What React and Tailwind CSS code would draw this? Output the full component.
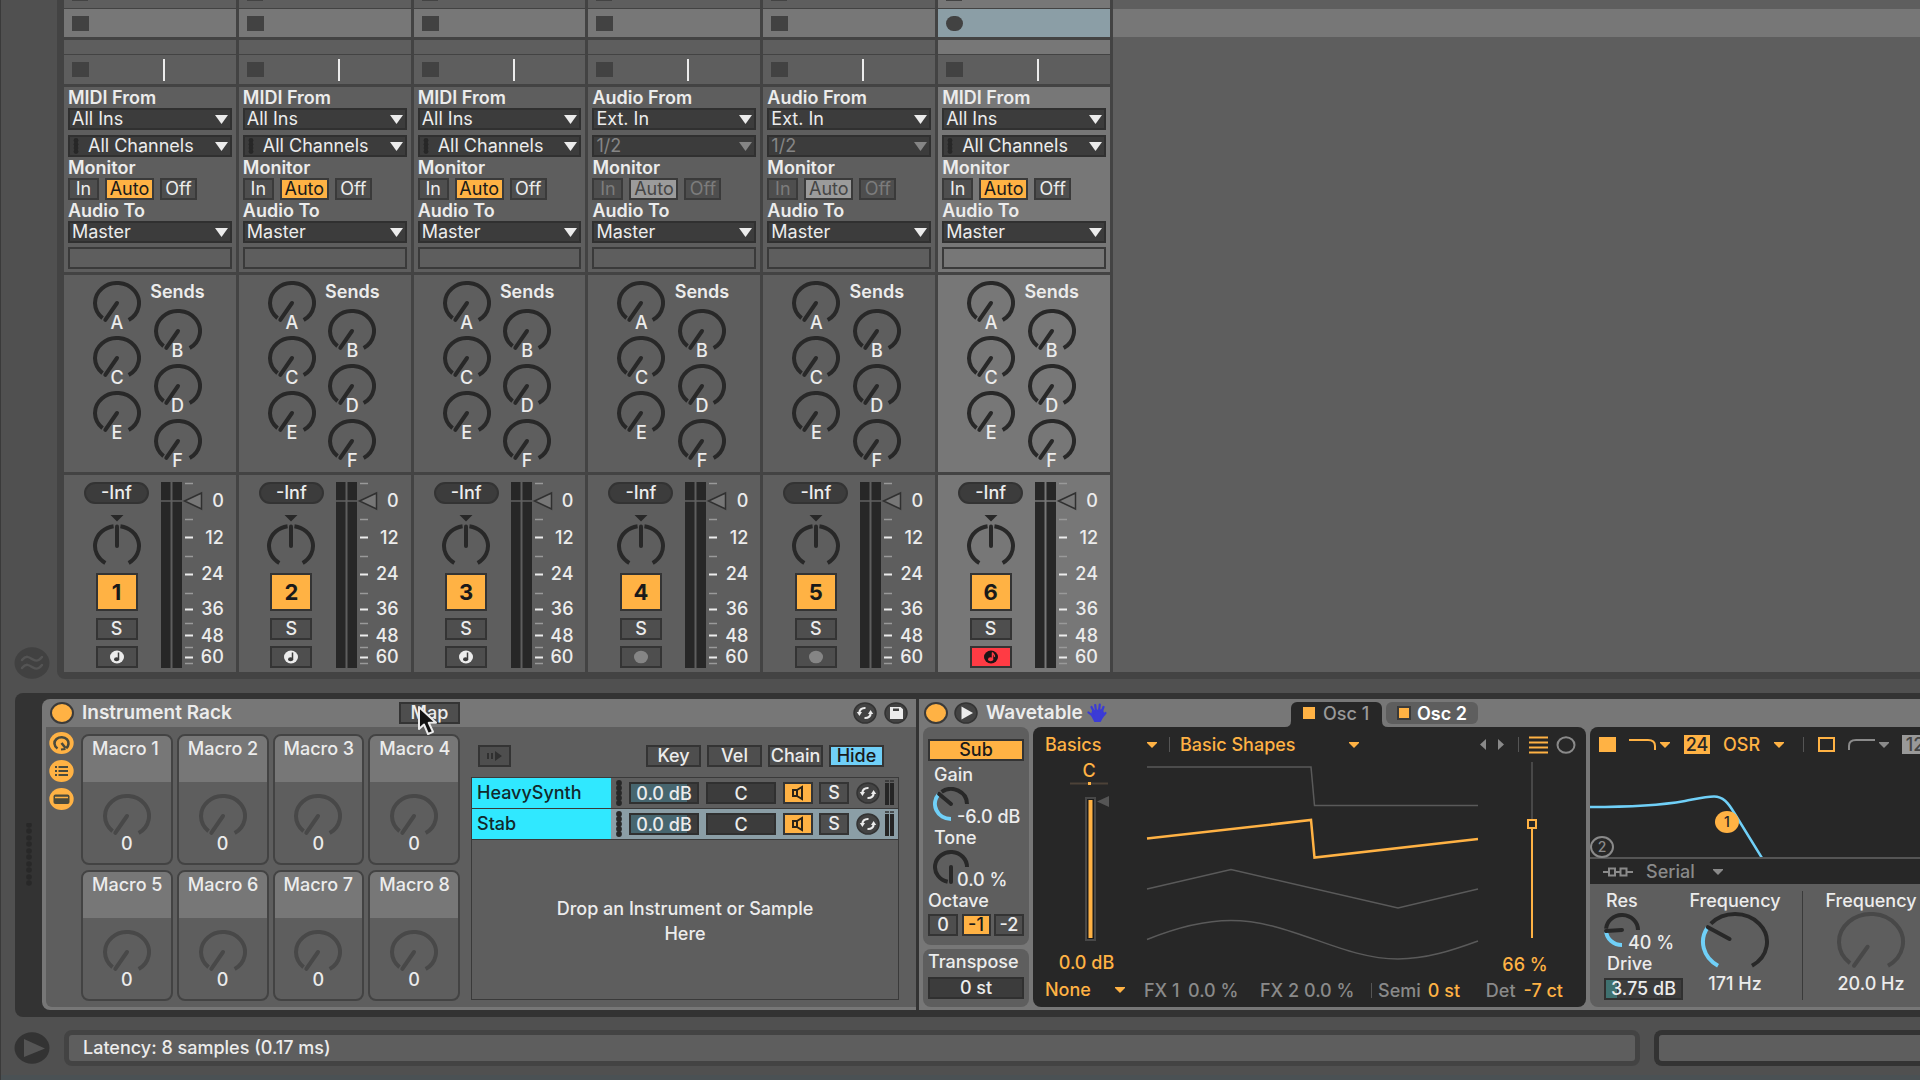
import { useState } from 'react'

const TRACKS = [
  { id: 1, type: 'midi' },
  { id: 2, type: 'midi' },
  { id: 3, type: 'midi' },
  { id: 4, type: 'audio' },
  { id: 5, type: 'audio' },
  { id: 6, type: 'midi', selected: true, armed: true },
]

const METER_LABELS = [
  { text: '0', height: 'h-[36px]' },
  { text: '12', height: 'h-[37px]' },
  { text: '24', height: 'h-[36px]' },
  { text: '36', height: 'h-[34px]' },
  { text: '48', height: 'h-[19px]' },
  { text: '60', height: 'h-[24px]' },
]
const MAJOR_TICKS = [62, 99, 134, 160, 182]
const MINOR_TICKS = [8, 44, 81, 118, 148, 172, 188]

const BUTTON = 'h-[22px] border-2 border-[#343434] bg-[#4e4e4e] text-center leading-[18px] text-[#ececec]'
const BUTTON_ON = 'h-[22px] border-2 border-[#343434] bg-[#ffb244] text-center leading-[18px] text-[#1a1a1a]'
const FIELD = 'h-[22px] border-2 border-[#303030] bg-[#3c3c3c] text-center leading-[18px] text-[#ececec] outline-none'

function point(cx, cy, rx, ry, angle) {
  const rad = (angle * Math.PI) / 180
  return `${(cx + rx * Math.sin(rad)).toFixed(2)} ${(cy - ry * Math.cos(rad)).toFixed(2)}`
}

function arc(cx, cy, rx, ry, from, to) {
  const large = to - from > 180 ? 1 : 0
  return `M${point(cx, cy, rx, ry, from)}A${rx} ${ry} 0 ${large} 1 ${point(cx, cy, rx, ry, to)}`
}

function Knob({ label, rx = 22, ry = 20, start = -148, end = 148, value = -148, inner = 0, gap = 9, color = '#282828', width = 48, height = 44, className = '' }) {
  const cx = width / 2
  const cy = ry + 2
  const from = value + gap

  return (
    <span className={`relative block shrink-0 ${className}`}>
      <svg width={width} height={height} fill="none" strokeWidth="4" aria-hidden="true">
        {value > start && <path d={arc(cx, cy, rx, ry, start, value)} stroke="#70d0f8" />}
        <path d={arc(cx, cy, rx, ry, from, end)} stroke={color} />
        <path
          d={`M${point(cx, cy, rx * inner, ry * inner, value)}L${point(cx, cy, rx, ry, value)}`}
          stroke={color}
          strokeLinecap="round"
        />
      </svg>
      <input type="range" className="absolute inset-0 size-full opacity-0" aria-label={label} />
    </span>
  )
}

function Caret({ className = '' }) {
  return (
    <svg className={`pointer-events-none absolute ${className}`} width="13" height="9" viewBox="0 0 13 9" aria-hidden="true">
      <path d="M0 0h13L6.500 9z" fill="currentColor" />
    </svg>
  )
}

function SmallCaret() {
  return (
    <svg className="pointer-events-none absolute right-0 top-[9px]" width="10" height="6" viewBox="0 0 10 6" aria-hidden="true">
      <path d="M0 0h10v1L5 6 0 1z" fill="currentColor" />
    </svg>
  )
}

function TrackSelect({ label, value, disabled, dots, className = '' }) {
  return (
    <div className={`relative ${disabled ? 'text-[#858585]' : 'text-[#ececec]'} ${className}`}>
      <select
        aria-label={label}
        disabled={disabled}
        className={`block h-[22px] w-full appearance-none border-2 border-[#303030] bg-[#3c3c3c] leading-[18px] opacity-100 outline-none ${dots ? 'pl-[18px]' : 'pl-[2px]'}`}
      >
        <option>{value}</option>
      </select>
      {dots && (
        <svg className="pointer-events-none absolute left-[5px] top-[3px]" width="6" height="16" fill="#272727" aria-hidden="true">
          <circle cx="3" cy="2.500" r="2.400" />
          <circle cx="3" cy="6.200" r="2.400" />
          <circle cx="3" cy="9.900" r="2.400" />
          <circle cx="3" cy="13.600" r="2.400" />
        </svg>
      )}
      <Caret className="right-[4px] top-[7px]" />
    </div>
  )
}

function PlainSelect({ label, value, className = '', color = 'text-[#ffb244]' }) {
  return (
    <div className={`relative shrink-0 ${color} ${className}`}>
      <select aria-label={label} className="block h-6 w-full appearance-none bg-transparent leading-6 outline-none">
        <option>{value}</option>
      </select>
      <SmallCaret />
    </div>
  )
}

function MonitorButtons({ disabled }) {
  const [mode, setMode] = useState('Auto')
  const widths = { In: 'w-[31px]', Auto: 'w-[49px]', Off: 'w-[37px]' }

  return (
    <div className="flex gap-[6px]">
      {['In', 'Auto', 'Off'].map((name) => {
        const on = mode === name
        const tone = disabled
          ? on
            ? 'bg-[#9b9b9b] text-[#454545]'
            : 'bg-[#4e4e4e] text-[#7c7c7c]'
          : on
            ? 'bg-[#ffb244] text-[#1a1a1a]'
            : 'bg-[#4e4e4e] text-[#ececec]'
        return (
          <button
            key={name}
            type="button"
            disabled={disabled}
            aria-pressed={on}
            className={`h-[22px] border-2 border-[#3a3a3a] text-center leading-[18px] ${widths[name]} ${tone}`}
            onClick={() => setMode(name)}
          >
            {name}
          </button>
        )
      })}
    </div>
  )
}

function ArmIcon({ type, armed }) {
  if (type === 'audio') {
    return (
      <svg width="16" height="14" aria-hidden="true">
        <ellipse cx="8" cy="7" rx="7" ry="6.300" fill="#858585" />
      </svg>
    )
  }
  const disc = armed ? '#1d1416' : '#ececec'
  const note = armed ? '#ff3b44' : '#3c3c3c'
  return (
    <svg width="16" height="14" aria-hidden="true">
      <ellipse cx="8" cy="7" rx="7" ry="6.500" fill={disc} />
      <path d="M9.500 2.500V9" stroke={note} strokeWidth="1.500" fill="none" />
      <ellipse cx="7.600" cy="9.300" rx="2.600" ry="2" fill={note} />
      {armed && <path d="M9.500 2.500c.3 2 2.500 2 2 4.500" stroke={note} strokeWidth="1.300" fill="none" />}
    </svg>
  )
}

function Sends() {
  const cell = (name) => (
    <div key={name} className="flex h-[55px] flex-col items-center">
      <Knob label={`Send ${name}`} height={42} />
      <span className="pointer-events-none relative -mt-[11px] h-5 font-medium leading-[22px]">{name}</span>
    </div>
  )
  return (
    <div className="flex h-[197px] pl-[23px]">
      <div className="w-[60px] pt-[6px]">{['A', 'C', 'E'].map(cell)}</div>
      <div className="w-[61px] pt-[6px]">
        <div className="mb-2 h-5 text-center font-semibold leading-[22px]">Sends</div>
        {['B', 'D', 'F'].map(cell)}
      </div>
    </div>
  )
}

function Mixer({ track }) {
  return (
    <div className="flex h-[197px]">
      <div className="ml-5 flex w-[65px] shrink-0 flex-col items-center pt-[7px]">
        <div className="h-[22px] w-full rounded-full border-2 border-[#333] bg-[#3c3c3c] text-center font-medium leading-[18px]">-Inf</div>
        <span className="relative mt-[10px] mb-[8px]">
          <svg className="block" width="50" height="51" fill="none" stroke="#282828" strokeWidth="4" aria-hidden="true">
            <path d="M18.500 1h13L25 7.500z" fill="#282828" stroke="none" />
            <path d={arc(25, 32, 22, 20, -148, -9)} />
            <path d={arc(25, 32, 22, 20, 9, 148)} />
            <path d="M25 12.500V32" strokeLinecap="round" />
          </svg>
          <input type="range" className="absolute inset-0 size-full opacity-0" aria-label="Track panning" />
        </span>
        <button type="button" className="h-[38px] w-[42px] border-2 border-[#343434] bg-[#ffb244] text-[22px] font-bold leading-[34px] text-[#1a1a1a]">
          {track.id}
        </button>
        <button type="button" className={`mt-[7px] w-[42px] font-medium ${BUTTON}`}>S</button>
        <button
          type="button"
          aria-label="Arm"
          className={`mt-[6px] flex h-[22px] w-[42px] items-center justify-center border-2 border-[#343434] ${track.armed ? 'bg-[#ff3b44]' : 'bg-[#4e4e4e]'}`}
        >
          <ArmIcon type={track.type} armed={track.armed} />
        </button>
      </div>
      <svg className="ml-[12px] shrink-0 overflow-visible" width="36" height="197" aria-hidden="true">
        <path d="M0 7h9.500v186H0zM11.500 7H21v186h-9.500z" fill="#272727" />
        <path d="M0 26h21" stroke={track.selected ? '#777' : '#626262'} strokeWidth="1.500" />
        <path d="M23.500 26l17-8v16z" fill="#777" stroke="#303030" strokeWidth="1.500" />
        {MAJOR_TICKS.map((y) => (
          <path key={y} d={`M24 ${y}.5h8`} stroke="#ececec" strokeWidth="2" />
        ))}
        {MINOR_TICKS.map((y) => (
          <path key={y} d={`M24 ${y}.5h8`} stroke="#999" strokeWidth="1.500" />
        ))}
      </svg>
      <div className="flex-1 pr-[12px] pt-[8px] text-right">
        {METER_LABELS.map((label) => (
          <div key={label.text} className={`flex items-center justify-end font-medium leading-none ${label.height}`}>
            {label.text}
          </div>
        ))}
      </div>
    </div>
  )
}

function Track({ track }) {
  const midi = track.type === 'midi'
  const body = track.selected ? 'bg-[#777]' : 'bg-[#5e5e5e]'

  return (
    <section className="min-w-0" aria-label={`Track ${track.id}`}>
      <div className={`mb-px h-[8px] ${body}`}>
        <div className="ml-[8px] h-px w-4 bg-[#434343]" />
      </div>
      <div className={`mb-[3px] flex h-7 items-center pl-[8px] ${track.selected ? 'bg-[#8b9ea6]' : 'bg-[#777]'}`}>
        <button
          type="button"
          aria-label={track.selected ? 'Record clip' : 'Stop clip'}
          className={`h-[15px] w-[17px] bg-[#424242] ${track.selected ? 'rounded-full' : ''}`}
        />
      </div>
      <div className={`mb-px h-[14px] ${body}`} />
      <div className="mb-[3px] flex h-[29px] items-center bg-[#5e5e5e] pl-[8px]">
        <button type="button" aria-label="Stop track clips" className="h-[15px] w-[17px] bg-[#424242]" />
        <div className="ml-[74px] h-[22px] w-[2px] bg-[#ececec]" />
      </div>
      <div className={`mb-[3px] h-[185px] px-1 ${body}`}>
        <div className="h-[21px] font-semibold leading-[22px]">{midi ? 'MIDI From' : 'Audio From'}</div>
        <TrackSelect label="Input type" value={midi ? 'All Ins' : 'Ext. In'} />
        <TrackSelect className="mt-[5px]" label="Input channel" value={midi ? 'All Channels' : '1/2'} disabled={!midi} dots={midi} />
        <div className="h-[21px] font-semibold leading-[21px]">Monitor</div>
        <MonitorButtons disabled={!midi} />
        <div className="h-[21px] font-semibold leading-[21px]">Audio To</div>
        <TrackSelect label="Output type" value="Master" />
        <div className="mt-[4px] h-[22px] border-2 border-[#3a3a3a]" />
      </div>
      <div className={`mb-[3px] ${body}`}>
        <Sends />
      </div>
      <div className={body}>
        <Mixer track={track} />
      </div>
    </section>
  )
}

function PowerButton() {
  return <button type="button" aria-label="Device on" aria-pressed="true" className="h-[22px] w-6 shrink-0 rounded-[50%] border-2 border-[#3a3a3a] bg-[#ffb244]" />
}

function SwapIcon() {
  return (
    <svg width="24" height="22" viewBox="0 0 24 22" fill="none" stroke="#ececec" strokeWidth="2.200" aria-hidden="true">
      <ellipse cx="12" cy="11" rx="11" ry="10" fill="#434343" stroke="#333" strokeWidth="1.500" />
      <path d="M12.500 6C8.500 5.800 6.500 8 6.300 11" />
      <path d="M3.800 10h5.200l-2.600 4z" fill="#ececec" stroke="none" />
      <path d="M11.500 16c4 .2 6-2 6.200-5" />
      <path d="M20.200 12H15l2.600-4z" fill="#ececec" stroke="none" />
    </svg>
  )
}

function SaveIcon() {
  return (
    <svg width="24" height="22" viewBox="0 0 24 22" aria-hidden="true">
      <ellipse cx="12" cy="11" rx="11" ry="10" fill="#434343" stroke="#333" strokeWidth="1.500" />
      <path d="M6 5h10.500L19 7.200V17H6z" fill="#ececec" />
      <path d="M9 6.500h6V9H9z" fill="#434343" />
    </svg>
  )
}

function RackSideIcons() {
  return (
    <div className="flex w-[35px] shrink-0 flex-col gap-[6px] pl-[3px] pt-[5px]">
      <button type="button" aria-label="Show macros">
        <svg width="25" height="22" viewBox="0 0 25 22" fill="none" stroke="#4a4a3c" strokeWidth="2.600" aria-hidden="true">
          <ellipse cx="12.500" cy="11" rx="12.200" ry="11" fill="#ffb244" stroke="none" />
          <path d="M8.500 16.500C4.800 14 4.500 9.500 7.500 7c3-2.500 8-2.300 10.500.3 2.300 2.500 2 6.500-.8 9" />
          <path d="M12.500 11l4 5" />
          <path d="M12 17.500l4.500-.5" strokeWidth="2" />
        </svg>
      </button>
      <button type="button" aria-label="Show chains">
        <svg width="25" height="22" viewBox="0 0 25 22" stroke="#4a4a3c" strokeWidth="2" aria-hidden="true">
          <ellipse cx="12.500" cy="11" rx="12.200" ry="11" fill="#ffb244" stroke="none" />
          <path d="M6 7h2M6 11h2M6 15h2M9.500 7H19M9.500 11H19M9.500 15H19" />
        </svg>
      </button>
      <button type="button" aria-label="Show devices">
        <svg width="25" height="22" viewBox="0 0 25 22" aria-hidden="true">
          <ellipse cx="12.500" cy="11" rx="12.200" ry="11" fill="#ffb244" />
          <rect x="4.500" y="6.500" width="16" height="9.500" rx="2" fill="#4a4a3c" />
          <path d="M6 9.500h13" stroke="#ffb244" strokeWidth="1.500" />
        </svg>
      </button>
    </div>
  )
}

function Macro({ index }) {
  return (
    <div className="h-[131px] overflow-hidden rounded-lg border-2 border-[#434343]">
      <div className="h-[46px] bg-[#777] pl-[9px] pt-[2px] font-medium leading-[21px] whitespace-nowrap">Macro {index}</div>
      <div className="flex flex-col items-center pt-[12px]">
        <Knob label={`Macro ${index}`} color="#484848" height={42} />
        <span className="-mt-[2px] font-medium leading-5">0</span>
      </div>
    </div>
  )
}

function ChainRow({ name, selected }) {
  return (
    <li className={`flex h-[31px] items-center border-b border-[#3a3a3a] ${selected ? 'bg-[#8b9ea6]' : ''}`}>
      <span className="h-full w-[139px] bg-[#30e8ff] pl-[5px] font-medium leading-[30px] text-[#12292c]">{name}</span>
      <svg className="ml-[5px]" width="6" height="26" fill="#272727" aria-hidden="true">
        {[3, 8, 13, 18, 23].map((y) => (
          <circle key={y} cx="3" cy={y} r="2.900" />
        ))}
      </svg>
      <input
        aria-label={`${name} volume`}
        defaultValue="0.0 dB"
        className="ml-[7px] h-[22px] w-[70px] border-2 border-[#303030] bg-linear-to-r from-[#47666f] from-85% to-[#3c3c3c] to-85% text-center font-medium leading-[18px] text-[#ececec] outline-none"
      />
      <input aria-label={`${name} pan`} defaultValue="C" className={`ml-[7px] w-[70px] font-medium ${FIELD}`} />
      <button type="button" aria-label="Chain activator" className={`ml-[7px] flex w-[30px] items-center justify-center ${BUTTON_ON}`}>
        <svg width="14" height="16" fill="none" stroke="#2a2216" strokeWidth="2" aria-hidden="true">
          <path d="M2 5h4v6H2zM6 5l5-3v12l-5-3" />
        </svg>
      </button>
      <button type="button" className={`ml-[6px] w-[30px] font-medium ${BUTTON}`}>S</button>
      <button type="button" aria-label="Hot swap" className="ml-[7px]">
        <SwapIcon />
      </button>
      <svg className="ml-[5px]" width="10" height="26" aria-hidden="true">
        <path d="M0 3h4v22H0zM5 3h4v22H5z" fill="#252525" />
        <path d="M0 1h4M5 1h4" stroke="#333" strokeWidth="1.500" />
      </svg>
    </li>
  )
}

function InstrumentRack() {
  return (
    <section className="w-[874px] shrink-0 rounded-l-lg bg-[#777] pb-[3px] pl-1">
      <header className="flex h-7 items-center pl-[4px] pr-[8px]">
        <PowerButton />
        <h2 className="ml-[8px] text-[19px] font-semibold">Instrument Rack</h2>
        <div className="relative ml-auto mr-[393px]">
          <button type="button" className={`block w-[61px] font-medium ${BUTTON}`}>Map</button>
          <svg className="absolute left-[18px] top-[3px]" width="24" height="32" viewBox="0 0 24 32" aria-hidden="true">
            <path d="M2 2v22l5-4.500L11 29l5-2.200-4.300-9H19z" fill="#111" stroke="#ececec" strokeWidth="2" strokeLinejoin="round" />
          </svg>
        </div>
        <button type="button" aria-label="Hot swap preset">
          <SwapIcon />
        </button>
        <button type="button" aria-label="Save preset" className="ml-[7px]">
          <SaveIcon />
        </button>
      </header>
      <div className="flex h-[280px] rounded-bl-md bg-[#5e5e5e]">
        <RackSideIcons />
        <div className="grid w-[379px] shrink-0 auto-rows-min grid-cols-4 gap-x-1 gap-y-[5px] pt-[7px]">
          {[1, 2, 3, 4, 5, 6, 7, 8].map((n) => (
            <Macro key={n} index={n} />
          ))}
        </div>
        <div className="ml-[11px] w-[428px] pt-[18px]">
          <div className="flex gap-[6px] pl-[7px] pr-[15px] font-medium">
            <button type="button" aria-label="Auto select" className={`mr-auto flex w-[33px] items-center justify-center ${BUTTON}`}>
              <svg width="17" height="12" fill="#303030" aria-hidden="true">
                <path d="M1 3h2v6H1zM5 3h2v6H5zM9 1l7 5-7 5z" />
              </svg>
            </button>
            <button type="button" className={`w-[55px] ${BUTTON}`}>Key</button>
            <button type="button" className={`w-[55px] ${BUTTON}`}>Vel</button>
            <button type="button" className={`flex w-[55px] justify-center ${BUTTON}`}>Chain</button>
            <button type="button" className="h-[22px] w-[55px] border-2 border-[#343434] bg-[#70d0f8] leading-[18px] text-[#1a1a1a]">Hide</button>
          </div>
          <div className="mt-[10px] h-[223px] border border-[#3a3a3a]">
            <ul>
              <ChainRow name="HeavySynth" />
              <ChainRow name="Stab" selected />
            </ul>
            <p className="mx-auto mt-[56px] w-[280px] text-center font-medium leading-[25px]">Drop an Instrument or Sample Here</p>
          </div>
        </div>
      </div>
    </section>
  )
}

function SubPanel() {
  const small = { rx: 16, ry: 15, width: 36, height: 34, start: -180, end: 90, gap: 12 }
  return (
    <div className="flex w-[106px] shrink-0 flex-col gap-1 font-medium">
      <div className="h-[218px] rounded-lg bg-[#5e5e5e] px-[5px] pt-[12px]">
        <button type="button" className={`mb-[3px] block w-full ${BUTTON_ON}`}>Sub</button>
        <div className="h-[21px] pl-[6px] leading-[21px]">Gain</div>
        <div className="flex h-[42px] pl-[5px]">
          <Knob label="Sub gain" {...small} value={-48} className="mt-[2px]" />
          <span className="pointer-events-none relative -ml-[12px] self-end leading-5 whitespace-nowrap">-6.0 dB</span>
        </div>
        <div className="h-[21px] pl-[6px] leading-[21px]">Tone</div>
        <div className="flex h-[42px] pl-[5px]">
          <Knob label="Sub tone" {...small} value={-180} className="mt-[2px]" />
          <span className="pointer-events-none relative -ml-[12px] self-end leading-5 whitespace-nowrap">0.0 %</span>
        </div>
        <div className="mb-[3px] h-[21px] leading-[21px]">Octave</div>
        <div className="flex justify-between">
          <button type="button" className={`w-[30px] ${BUTTON}`}>0</button>
          <button type="button" className={`w-[29px] ${BUTTON_ON}`}>-1</button>
          <button type="button" className={`w-[30px] ${BUTTON}`}>-2</button>
        </div>
      </div>
      <div className="h-[58px] rounded-lg bg-[#5e5e5e] px-[5px] pt-[2px]">
        <label className="mb-[2px] block h-[21px] leading-[21px]" htmlFor="transpose">Transpose</label>
        <input id="transpose" defaultValue="0 st" className={`w-full ${FIELD}`} />
      </div>
    </div>
  )
}

function OscPanel() {
  return (
    <div className="flex w-[553px] shrink-0 flex-col rounded-lg bg-[#272727] font-medium text-[#ffb244]">
      <div className="flex h-[34px] items-center pl-[12px] pr-[10px] pt-px">
        <PlainSelect label="Wavetable category" value="Basics" className="w-[112px]" />
        <div className="mx-[12px] mr-[10px] h-[15px] w-px bg-[#555]" />
        <PlainSelect label="Wavetable" value="Basic Shapes" className="w-[179px]" />
        <div className="ml-auto flex items-center">
          <button type="button" aria-label="Previous wavetable">
            <svg width="7" height="11" fill="#8a8a8a"><path d="M6 0v11L0 5.500z" /></svg>
          </button>
          <button type="button" aria-label="Next wavetable" className="ml-[11px]">
            <svg width="7" height="11" fill="#8a8a8a"><path d="M0 0v11l6-5.500z" /></svg>
          </button>
          <div className="mx-[10px] ml-[13px] h-[15px] w-px bg-[#555]" />
          <button type="button" aria-label="Stacked view">
            <svg width="19" height="18" stroke="#ffb244" strokeWidth="2"><path d="M0 1.500h19M0 6.500h19M0 11.500h19M0 16.500h19" /></svg>
          </button>
          <button type="button" aria-label="Polar view" className="ml-[8px]">
            <svg width="20" height="18" fill="none" stroke="#8a8a8a" strokeWidth="2"><ellipse cx="10" cy="9" rx="8.500" ry="7.800" /></svg>
          </button>
        </div>
      </div>
      <div className="flex h-[214px]">
        <div className="flex w-[112px] flex-col items-center">
          <span className="leading-5">C</span>
          <svg width="112" height="172" aria-hidden="true">
            <path d="M37 2.500h38" stroke="#4d4238" strokeWidth="2" />
            <path d="M56.500 1v3" stroke="#ffb244" strokeWidth="3" />
            <rect x="53" y="17" width="9" height="142" fill="#1c1c1c" stroke="#484848" strokeWidth="2" />
            <path d="M57.500 19v138" stroke="#ffb244" strokeWidth="4" />
            <path d="M64 20.500l12-5.500v11z" fill="#555" />
          </svg>
          <span className="pr-[5px] leading-5">0.0 dB</span>
        </div>
        <svg className="shrink-0" width="335" height="214" fill="none" stroke="#5a5a5a" strokeWidth="1.500" aria-hidden="true">
          <path d="M2 6h164l3.500 38.500H333" />
          <path d="M2 128l84-19.500L253 147l80-19" />
          <path d="M2 178.500C28 168 55 159.500 86 159.500c60 0 110 38.500 167 38.500 28 0 54-8.500 80-18" />
          <path d="M2 77.500L166 59l3.500 37.500L333 78" stroke="#ffb244" strokeWidth="2.500" />
        </svg>
        <div className="flex flex-1 flex-col items-center">
          <span className="relative block h-[194px]">
            <svg width="20" height="194" fill="none" stroke="#ffb244" aria-hidden="true">
              <path d="M9 1v58" stroke="#555" strokeWidth="1.500" />
              <path d="M9 67v110" strokeWidth="2" />
              <rect x="5" y="59" width="8" height="8" strokeWidth="2" />
            </svg>
            <input type="range" aria-label="Wave position" className="absolute inset-0 size-full opacity-0" />
          </span>
          <span className="pr-[16px] leading-5">66 %</span>
        </div>
      </div>
      <div className="flex h-[30px] items-center pl-[12px] pr-[23px] whitespace-nowrap text-[#8a8a8a]">
        <PlainSelect label="Effect mode" value="None" className="w-[80px]" />
        <span className="ml-[19px] w-[44px]">FX 1</span>
        <span className="w-[72px]">0.0 %</span>
        <span className="w-[44px]">FX 2</span>
        <span>0.0 %</span>
        <span className="ml-auto flex items-center">
          <span className="mr-[6px] h-[15px] w-px bg-[#555]" />
          Semi
          <span className="ml-[7px] w-[58px] text-[#ffb244]">0 st</span>
          Det
          <span className="ml-[8px] text-[#ffb244]">-7 ct</span>
        </span>
      </div>
    </div>
  )
}

function FilterPanel() {
  const small = { rx: 16, ry: 15, width: 36, height: 34, start: -180, end: 90, gap: 9 }
  const large = { rx: 32, ry: 28, width: 70, height: 60, inner: 0.2 }
  return (
    <div className="min-w-0 flex-1 overflow-hidden rounded-l-lg bg-[#5e5e5e] font-medium">
      <div className="flex h-[34px] w-[440px] items-center bg-[#272727] pl-[9px] pt-px text-[#ffb244]">
        <button type="button" aria-label="Filter 1 on" className="h-[15px] w-[17px] bg-[#ffb244]" />
        <span className="relative ml-[12px] h-6 w-[42px]">
          <svg width="42" height="24" fill="none" stroke="#ffb244" strokeWidth="2" aria-hidden="true">
            <path d="M1 7h19q7 0 7 6v4" />
          </svg>
          <SmallCaret />
        </span>
        <button type="button" className="ml-[14px] h-[19px] w-[26px] bg-[#ffb244] leading-[19px] text-[#272727]">24</button>
        <PlainSelect label="Filter circuit" value="OSR" className="ml-[13px] w-[61px]" />
        <div className="mx-[14px] ml-[19px] h-[15px] w-px bg-[#555]" />
        <button type="button" aria-label="Filter 2 on" className="h-[15px] w-[17px] border-2 border-[#ffb244]" />
        <span className="relative ml-[12px] h-6 w-[42px] text-[#8a8a8a]">
          <svg width="42" height="24" fill="none" stroke="#8a8a8a" strokeWidth="2" aria-hidden="true">
            <path d="M2 17v-4q0-6 7-6h19" />
          </svg>
          <SmallCaret />
        </span>
        <button type="button" className="ml-[13px] h-[19px] w-[26px] bg-[#999] leading-[19px] text-[#444]">12</button>
      </div>
      <div className="relative h-[98px] border-b-2 border-[#555] bg-[#272727]">
        <svg width="330" height="96" fill="none" aria-hidden="true">
          <path d="M0 46c40 0 67-1 95-6 13-2.500 21-4.500 29-4.500 9 0 14 6 20 16L172 97" stroke="#70d0f8" strokeWidth="2.500" />
        </svg>
        <span className="absolute left-[125px] top-[50px] h-[22px] w-6 rounded-[50%] bg-[#ffb244] text-center text-[14px] leading-[22px] text-[#272727]">1</span>
        <span className="absolute left-0 top-[75px] h-[22px] w-6 rounded-[50%] border-2 border-[#8a8a8a] text-center text-[14px] leading-[18px] text-[#8a8a8a]">2</span>
      </div>
      <div className="flex h-[25px] items-center bg-[#272727] pl-[13px]">
        <svg width="30" height="10" fill="none" stroke="#8a8a8a" strokeWidth="2" aria-hidden="true">
          <path d="M0 5h6M13 5h4M24 5h6M6 1.500h6v7H6zM17.500 1.500h6v7h-6z" />
        </svg>
        <PlainSelect label="Filter routing" value="Serial" className="ml-[13px] w-[77px]" color="text-[#8a8a8a]" />
      </div>
      <div className="flex h-[123px] pt-[6px]">
        <div className="ml-[14px] w-[79px] shrink-0">
          <div className="h-[21px] pl-[2px] leading-[21px]">Res</div>
          <div className="flex h-[42px]">
            <Knob label="Filter resonance" {...small} value={-94} className="mt-[2px]" />
            <span className="pointer-events-none relative -ml-[12px] self-end leading-5 whitespace-nowrap">40 %</span>
          </div>
          <label htmlFor="drive" className="mb-[1px] block h-[21px] pl-[3px] leading-[21px]">Drive</label>
          <input
            id="drive"
            defaultValue="3.75 dB"
            className="h-[22px] w-full border-2 border-[#303030] bg-linear-to-r from-[#3f7170] from-15% to-[#3c3c3c] to-15% text-center leading-[18px] text-[#ececec] outline-none"
          />
        </div>
        <div className="ml-[3px] flex w-[98px] shrink-0 flex-col items-center">
          <div className="h-[21px] leading-[21px]">Frequency</div>
          <Knob label="Filter 1 frequency" {...large} value={-58} className="mt-[1px]" />
          <span className="mt-[2px] leading-5">171 Hz</span>
        </div>
        <div className="ml-[18px] mt-[1px] h-[109px] w-px shrink-0 bg-[#3a3a3a]" />
        <div className="ml-[19px] flex w-[98px] shrink-0 flex-col items-center">
          <div className="h-[21px] leading-[21px]">Frequency</div>
          <Knob label="Filter 2 frequency" {...large} color="#484848" className="mt-[1px]" />
          <span className="mt-[2px] leading-5">20.0 Hz</span>
        </div>
      </div>
    </div>
  )
}

function Wavetable() {
  return (
    <section className="ml-[3px] min-w-0 flex-1 bg-[#777] pb-[3px] pl-1">
      <header className="flex h-7">
        <div className="flex w-[368px] shrink-0 items-center pl-px">
          <PowerButton />
          <button type="button" aria-label="Unfold device" className="ml-[6px]">
            <svg width="24" height="22" viewBox="0 0 24 22" aria-hidden="true">
              <ellipse cx="12" cy="11" rx="11" ry="10" fill="#434343" stroke="#333" strokeWidth="1.500" />
              <path d="M7.500 4.500L19 11 7.500 17.500z" fill="#ececec" />
            </svg>
          </button>
          <h2 className="ml-[8px] text-[19px] font-semibold">Wavetable</h2>
          <svg className="ml-[4px]" width="20" height="20" viewBox="0 0 20 20" fill="none" stroke="#3b3bd6" strokeWidth="2.200" strokeLinecap="round" aria-hidden="true">
            <path d="M6 8l9-.500 1.500 4L13 18H8l-3-6z" fill="#3b3bd6" />
            <path d="M7 9L4.500 4M9 8L8.200 2M12 8l.8-6.500M14.500 9l2-5M15 14l3.500-4M6 13L1.500 9.500" />
          </svg>
        </div>
        <div role="tablist" className="flex gap-1 pt-[3px]">
          <button type="button" role="tab" aria-selected="true" className="relative flex h-[25px] w-[91px] items-center rounded-t-md bg-[#272727] pb-[3px] pl-[12px] font-medium text-[#999]">
            <span className="mr-[8px] size-[12px] bg-[#ffb244]" />
            Osc 1
            <svg className="absolute -left-[6px] bottom-0" width="6" height="6" fill="#272727"><path d="M6 0v6H0q6 0 6-6z" /></svg>
            <svg className="absolute -right-[6px] bottom-0" width="6" height="6" fill="#272727"><path d="M0 0v6h6q-6 0-6-6z" /></svg>
          </button>
          <button type="button" role="tab" aria-selected="false" className="flex h-[22px] w-[92px] items-center rounded-md bg-[#5e5e5e] pl-[11px] font-semibold text-white">
            <span className="mr-[6px] size-[14px] border-2 border-[#3a3a3a] bg-[#ffb244]" />
            Osc 2
          </button>
        </div>
      </header>
      <div className="flex h-[280px] gap-[4px]">
        <SubPanel />
        <OscPanel />
        <FilterPanel />
      </div>
    </section>
  )
}

export default function App() {
  return (
    <div className="flex min-h-screen w-full flex-col overflow-hidden border-l border-[#3a3a3a] bg-[#505050] font-['Inter',sans-serif] text-[18px] text-[#ececec]">
      <main className="flex">
        <div className="flex w-14 shrink-0 items-end pl-[13px]">
          <svg width="36" height="32" viewBox="0 0 36 32" fill="none" stroke="#545454" strokeWidth="2.500" strokeLinecap="round" aria-hidden="true">
            <ellipse cx="18" cy="16" rx="17.500" ry="15.700" fill="#414141" stroke="none" />
            <path d="M8 13c4-5 7-3 10-1s6 3 10-2M8 21c4-5 7-3 10-1s6 3 10-2" />
          </svg>
        </div>
        <div className="flex min-w-0 flex-1 gap-[3px] rounded-bl-lg bg-[#434343] pb-[7px] pl-[7px]">
          <div className="grid w-[1046px] shrink-0 grid-cols-6 gap-[3px]">
            {TRACKS.map((track) => (
              <Track key={track.id} track={track} />
            ))}
          </div>
          <div className="flex flex-1 flex-col bg-[#5e5e5e]">
            <div className="mt-[9px] h-7 bg-[#777]" />
          </div>
        </div>
      </main>

      <div className="ml-[14px] mt-[14px] flex rounded-l-lg bg-[#333] pb-[7px] pt-[6px]">
        <div className="flex w-[27px] shrink-0 items-center justify-center">
          <svg width="6" height="64" fill="#282828" aria-hidden="true">
            {[2, 8, 15, 21, 28, 34, 41, 47, 54, 60].map((y) => (
              <circle key={y} cx="3" cy={y} r="2.800" />
            ))}
          </svg>
        </div>
        <InstrumentRack />
        <Wavetable />
      </div>

      <footer className="mt-[13px] flex h-9 items-center pl-[13px]">
        <button type="button" aria-label="Play" className="shrink-0">
          <svg width="36" height="32" viewBox="0 0 36 32" aria-hidden="true">
            <ellipse cx="18" cy="16" rx="17.500" ry="15.700" fill="#333" />
            <path d="M10 7l21 9.500L10 25z" fill="#555" />
          </svg>
        </button>
        <div className="ml-[14px] h-full flex-1 rounded-lg border-[5px] border-[#434343] bg-[#5e5e5e] pl-[14px] font-medium leading-[26px]">
          Latency: 8 samples (0.17 ms)
        </div>
        <div className="ml-[14px] h-full w-[266px] rounded-l-lg border-y-[5px] border-l-[5px] border-[#333] bg-[#5e5e5e]" />
      </footer>
      <div className="mt-auto h-[5px] bg-[#4a5154]" />
    </div>
  )
}
